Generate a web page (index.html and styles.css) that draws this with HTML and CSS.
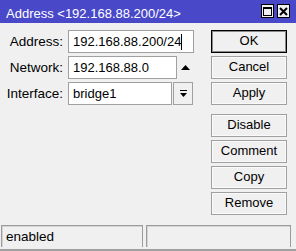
FILE: index.html
```html
<!DOCTYPE html>
<html lang="en">
<head>
	<meta charset="UTF-8">
	<title>Address &lt;192.168.88.200/24&gt;</title>
	<link rel="stylesheet" href="styles.css">
</head>
<body>
	<div class="window">
		<div class="titlebar">
			<span class="title">Address &lt;192.168.88.200/24&gt;</span>
			<span class="tbtn maxbtn">
				<svg width="9" height="9" viewBox="0 0 9 9"><rect x="0.5" y="0.5" width="8" height="8" fill="none" stroke="#000"/><rect x="0" y="0" width="9" height="2" fill="#000"/></svg>
			</span>
			<span class="tbtn">
				<svg width="9" height="9" viewBox="0 0 9 9"><path d="M1 1 L8 8 M8 1 L1 8" stroke="#000" stroke-width="2"/></svg>
			</span>
		</div>

		<div class="main">
			<div class="form">
				<div class="row">
					<label>Address:</label>
					<div class="field addr">192.168.88.200/24<span class="caret"></span></div>
				</div>
				<div class="row">
					<label>Network:</label>
					<div class="field net">192.168.88.0</div>
					<svg class="uparrow" width="9" height="5" viewBox="0 0 9 5"><polygon points="0,5 9,5 4.5,0" fill="#000"/></svg>
				</div>
				<div class="row">
					<label>Interface:</label>
					<div class="field iface">bridge1</div>
					<div class="ddbtn">
						<svg width="7" height="7" viewBox="0 0 7 7"><rect x="0" y="0" width="7" height="1" fill="#000"/><polygon points="0,3 7,3 3.5,7" fill="#000"/></svg>
					</div>
				</div>
			</div>

			<div class="buttons">
				<div class="btn default">OK</div>
				<div class="btn">Cancel</div>
				<div class="btn spaced">Apply</div>
				<div class="btn">Disable</div>
				<div class="btn">Comment</div>
				<div class="btn">Copy</div>
				<div class="btn">Remove</div>
			</div>
		</div>

		<div class="status">
			<div class="panel left">enabled</div>
			<div class="panel right"></div>
		</div>
	</div>
</body>
</html>
```

FILE: styles.css
```css
body {
	margin: 0;
	background-color: #f0f0f0;
	font-family: "Liberation Sans", Arial, sans-serif;
	color: #000;
}
.window {
	width: 296px;
	height: 251px;
	box-sizing: border-box;
	display: flex;
	flex-direction: column;
	background-color: #f0f0f0;
	border-bottom: 2px solid #a0a0a0;
}

/* title bar */
.titlebar {
	height: 23px;
	flex: none;
	display: flex;
	align-items: flex-start;
	background-color: #4848c8;
	color: #fff;
	padding-right: 6px;
}
.title {
	flex: 1;
	padding: 6px 0 0 6px;
	font-size: 13px;
	line-height: 15px;
	white-space: nowrap;
}
.tbtn {
	width: 13px;
	height: 14px;
	margin-top: 4px;
	box-sizing: border-box;
	border: 1px solid #000;
	background-color: #f0f0f0;
	display: flex;
	align-items: center;
	justify-content: center;
}
.maxbtn {
	margin-right: 3px;
}

/* form */
.main {
	flex: 1;
	display: flex;
	padding-top: 7px;
}
.form {
	width: 211px;
}
.row {
	display: flex;
	align-items: center;
	height: 23px;
	margin-bottom: 3px;
}
label {
	width: 63px;
	margin-right: 5px;
	text-align: right;
	font-size: 13.5px;
}
.field {
	height: 23px;
	box-sizing: border-box;
	border: 1px solid #a0a0a0;
	background-color: #fff;
	padding-left: 4px;
	font-size: 13px;
	line-height: 21px;
	white-space: nowrap;
	display: flex;
	align-items: center;
}
.addr {
	width: 126px;
}
.net {
	width: 109px;
}
.iface {
	width: 104px;
}
.caret {
	display: inline-block;
	width: 1px;
	height: 16px;
	background-color: #000;
}
.uparrow {
	margin-left: 4px;
}
.ddbtn {
	width: 20px;
	height: 23px;
	margin-left: 1px;
	box-sizing: border-box;
	border: 1px solid #a0a0a0;
	display: flex;
	align-items: center;
	justify-content: center;
}

/* buttons */
.buttons {
	width: 76px;
}
.btn {
	height: 23px;
	margin-bottom: 3px;
	box-sizing: border-box;
	border: 1px solid #a0a0a0;
	box-shadow: inset 0 0 0 1px #fafafa;
	background-color: #f0f0f0;
	font-size: 13px;
	line-height: 20px;
	text-align: center;
}
.btn.default {
	border-color: #000;
	box-shadow: inset 0 0 0 1px #8a8a8a;
}
.btn.spaced {
	margin-bottom: 9px;
}

/* status bar */
.status {
	flex: none;
	display: flex;
	height: 22px;
	margin-bottom: 2px;
	padding-left: 1px;
}
.panel {
	box-sizing: border-box;
	height: 22px;
	border: 1px solid #9b9b9b;
	border-bottom: none;
	box-shadow: inset 1px 1px 0 #d4d4d4;
	padding: 3px 0 0 4px;
	font-size: 13.5px;
	line-height: 16px;
}
.left {
	width: 142px;
	margin-right: 3px;
}
.right {
	width: 145px;
}
```
